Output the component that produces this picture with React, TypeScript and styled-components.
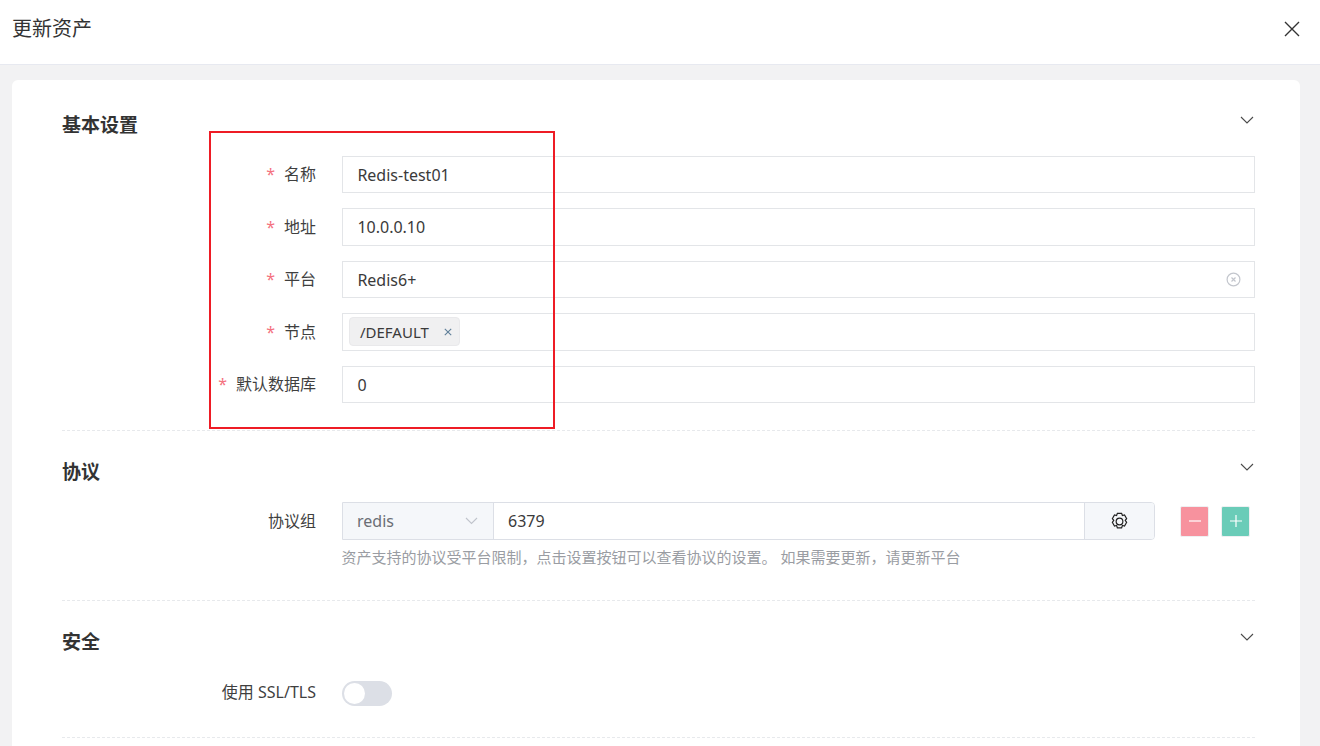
import React from "react";
import styled, { createGlobalStyle } from "styled-components";

const Global = createGlobalStyle`
  html, body { margin: 0; padding: 0; height: 100%; overflow: hidden; background: #f2f2f3; }
  body { font-family: "Noto Sans", "Noto Sans CJK SC", sans-serif; color: #3a3a3a; }
  * { box-sizing: border-box; }
`;

const Page = styled.div`
  position: relative;
  width: 1320px;
  height: 746px;
  overflow: hidden;
  background: #f2f2f3;
`;

const TopBar = styled.header`
  height: 65px;
  background: #fff;
  border-bottom: 1px solid #e7e9f0;
  padding: 0 19px 7px 12px;
  display: flex;
  align-items: center;
  justify-content: space-between;
`;

const Title = styled.h1`
  margin: 0;
  font-size: 20px;
  line-height: 24px;
  font-weight: 400;
  color: #333;
`;

const PlainButton = styled.button`
  border: 0;
  padding: 0;
  background: none;
  display: flex;
  color: #333;
`;

const Card = styled.main`
  margin: 15px 20px 0 12px;
  background: #fff;
  border-radius: 6px;
  padding: 0 45px 0 50px;
  height: 700px;
`;

const Section = styled.section<{ $height: number; $top: number }>`
  height: ${(p) => p.$height}px;
  border-bottom: 1px dashed #e7e9ec;
  padding-top: ${(p) => p.$top}px;
`;

const SectionHead = styled.div<{ $gap: number }>`
  display: flex;
  justify-content: space-between;
  align-items: flex-start;
  height: 36px;
  margin-bottom: ${(p) => p.$gap}px;
`;

const SectionTitle = styled.h2`
  margin: 0;
  font-size: 19px;
  line-height: 36px;
  font-weight: 700;
  color: #333;
`;

const Chevron = styled.span`
  display: flex;
  margin: 9px 1px 0 0;
  color: #4a4a4a;
`;

const Rows = styled.div`
  display: flex;
  flex-direction: column;
  gap: 15px;
`;

const Row = styled.div`
  display: grid;
  grid-template-columns: 254px 1fr;
  gap: 26px;
  align-items: center;
`;

const Label = styled.label`
  display: flex;
  justify-content: flex-end;
  align-items: center;
  font-size: 16px;
  line-height: 20px;
  color: #3f3f3f;
`;

const SwitchLabel = styled(Label)`
  padding-bottom: 3px;
`;

const Star = styled.span`
  color: #f4727f;
  margin-right: 9px;
  font-size: 16px;
`;

const Input = styled.div`
  height: 37.5px;
  border: 1px solid #e3e5e8;
  background: #fff;
  padding: 1px 14.4px 0;
  font-size: 16px;
  color: #3a3a3a;
  display: flex;
  align-items: center;
  justify-content: space-between;
`;

const TagInput = styled(Input)`
  padding: 0 6px;
  justify-content: flex-start;
`;

const Tag = styled.span`
  height: 29px;
  border: 1px solid #e9e9eb;
  border-radius: 4px;
  background: #f0f0f1;
  padding: 0 7px 0 10px;
  font-size: 15px;
  color: #3a3a3a;
  display: flex;
  align-items: center;
  gap: 15px;
`;

const TagClose = styled.span`
  display: flex;
  color: #5f7f99;
`;

const ClearIcon = styled.span`
  display: flex;
  color: #c3c6cd;
  margin-right: -1px;
`;

const ProtocolLine = styled.div`
  display: flex;
  align-items: center;
`;

const Group = styled.div`
  width: 813px;
  height: 38px;
  display: flex;
  border: 1px solid #dcdfe6;
  border-radius: 0 4px 4px 0;
  overflow: hidden;
  font-size: 16px;
`;

const Prefix = styled.div`
  width: 151px;
  background: #f5f7fa;
  border-right: 1px solid #dcdfe6;
  padding: 0 15px 0 14px;
  color: #6b6e75;
  display: flex;
  align-items: center;
  justify-content: space-between;
`;

const PortValue = styled.div`
  flex: 1;
  padding: 0 14px;
  display: flex;
  align-items: center;
  color: #3a3a3a;
`;

const Suffix = styled.div`
  width: 70px;
  background: #f5f7fa;
  border-left: 1px solid #dcdfe6;
  display: flex;
  align-items: center;
  justify-content: center;
  color: #222;
`;

const SquareButton = styled.button<{ $bg: string; $left: number }>`
  width: 29px;
  height: 31px;
  margin-left: ${(p) => p.$left}px;
  padding: 0;
  border: 1px solid #eef0f2;
  border-radius: 2px;
  background: ${(p) => p.$bg};
  color: #fff;
  display: flex;
  align-items: center;
  justify-content: center;
`;

const Hint = styled.div`
  margin: 7px 0 0 279.5px;
  font-size: 15px;
  line-height: 20px;
  color: #9a9da3;
`;

const SwitchTrack = styled.span`
  width: 50px;
  height: 25px;
  border-radius: 13px;
  background: #dcdfe6;
  display: flex;
  align-items: center;
  padding-left: 2px;
`;

const SwitchKnob = styled.span`
  width: 21px;
  height: 21px;
  border-radius: 50%;
  background: #fff;
`;

const Highlight = styled.div`
  position: absolute;
  left: 209px;
  top: 131px;
  width: 346px;
  height: 298px;
  border: 2px solid #ee1c25;
  pointer-events: none;
`;

const ChevronIcon = () => (
  <svg width="14" height="8" viewBox="0 0 14 8" fill="none" stroke="currentColor" strokeWidth="1.1">
    <path d="M1 1l6 6 6-6" />
  </svg>
);

const required = [
  { label: "名称", value: "Redis-test01" },
  { label: "地址", value: "10.0.0.10" },
];

export default function App() {
  return (
    <Page>
      <Global />
      <TopBar>
        <Title>更新资产</Title>
        <PlainButton aria-label="close">
          <svg width="18" height="18" viewBox="0 0 18 18" fill="none" stroke="currentColor" strokeWidth="1.4">
            <path d="M2 2l14 14M16 2L2 16" />
          </svg>
        </PlainButton>
      </TopBar>
      <Card>
        <Section $height={351} $top={27}>
          <SectionHead $gap={12.6}>
            <SectionTitle>基本设置</SectionTitle>
            <Chevron><ChevronIcon /></Chevron>
          </SectionHead>
          <Rows>
            {required.map((r) => (
              <Row key={r.label}>
                <Label><Star>*</Star>{r.label}</Label>
                <Input>{r.value}</Input>
              </Row>
            ))}
            <Row>
              <Label><Star>*</Star>平台</Label>
              <Input>
                Redis6+
                <ClearIcon>
                  <svg width="15" height="15" viewBox="0 0 15 15" fill="none" stroke="currentColor" strokeWidth="1.2">
                    <circle cx="7.5" cy="7.5" r="6.4" />
                    <path d="M5.5 5.5l4 4M9.5 5.5l-4 4" />
                  </svg>
                </ClearIcon>
              </Input>
            </Row>
            <Row>
              <Label><Star>*</Star>节点</Label>
              <TagInput>
                <Tag>
                  /DEFAULT
                  <TagClose>
                    <svg width="8" height="8" viewBox="0 0 8 8" fill="none" stroke="currentColor" strokeWidth="1.1">
                      <path d="M.8.8l6.4 6.4M7.2.8L.8 7.2" />
                    </svg>
                  </TagClose>
                </Tag>
              </TagInput>
            </Row>
            <Row>
              <Label><Star>*</Star>默认数据库</Label>
              <Input>0</Input>
            </Row>
          </Rows>
        </Section>
        <Section $height={170} $top={23}>
          <SectionHead $gap={12}>
            <SectionTitle>协议</SectionTitle>
            <Chevron><ChevronIcon /></Chevron>
          </SectionHead>
          <Row>
            <Label>协议组</Label>
            <ProtocolLine>
              <Group>
                <Prefix>
                  redis
                  <svg width="13" height="8" viewBox="0 0 13 8" fill="none" stroke="#c0c4cc" strokeWidth="1.1">
                    <path d="M1 1l5.5 5.5L12 1" />
                  </svg>
                </Prefix>
                <PortValue>6379</PortValue>
                <Suffix>
                  <svg width="19" height="19" viewBox="0 0 17 17" fill="none" stroke="currentColor" strokeWidth="1.05">
                    <path d="M6.6 1.2h3.8l.7 1.9 1.9-.4 1.9 3.2-1.3 1.6 1.3 1.8-1.9 3.2-1.9-.4-.7 2.1H6.6l-.7-2.1-1.9.4-1.9-3.2 1.3-1.8-1.3-1.6L4 2.7l1.9.4z" />
                    <circle cx="8.5" cy="8.5" r="3" />
                  </svg>
                </Suffix>
              </Group>
              <SquareButton $bg="#f7929e" $left={25} aria-label="remove">
                <svg width="12" height="12" viewBox="0 0 12 12" stroke="currentColor" strokeWidth="1.2"><path d="M0 6h12" /></svg>
              </SquareButton>
              <SquareButton $bg="#6accb8" $left={12} aria-label="add">
                <svg width="12" height="12" viewBox="0 0 12 12" stroke="currentColor" strokeWidth="1.2"><path d="M0 6h12M6 0v12" /></svg>
              </SquareButton>
            </ProtocolLine>
          </Row>
          <Hint>资产支持的协议受平台限制，点击设置按钮可以查看协议的设置。 如果需要更新，请更新平台</Hint>
        </Section>
        <Section $height={137} $top={23}>
          <SectionHead $gap={21}>
            <SectionTitle>安全</SectionTitle>
            <Chevron><ChevronIcon /></Chevron>
          </SectionHead>
          <Row>
            <SwitchLabel>使用 SSL/TLS</SwitchLabel>
            <SwitchTrack><SwitchKnob /></SwitchTrack>
          </Row>
        </Section>
      </Card>
      <Highlight />
    </Page>
  );
}
